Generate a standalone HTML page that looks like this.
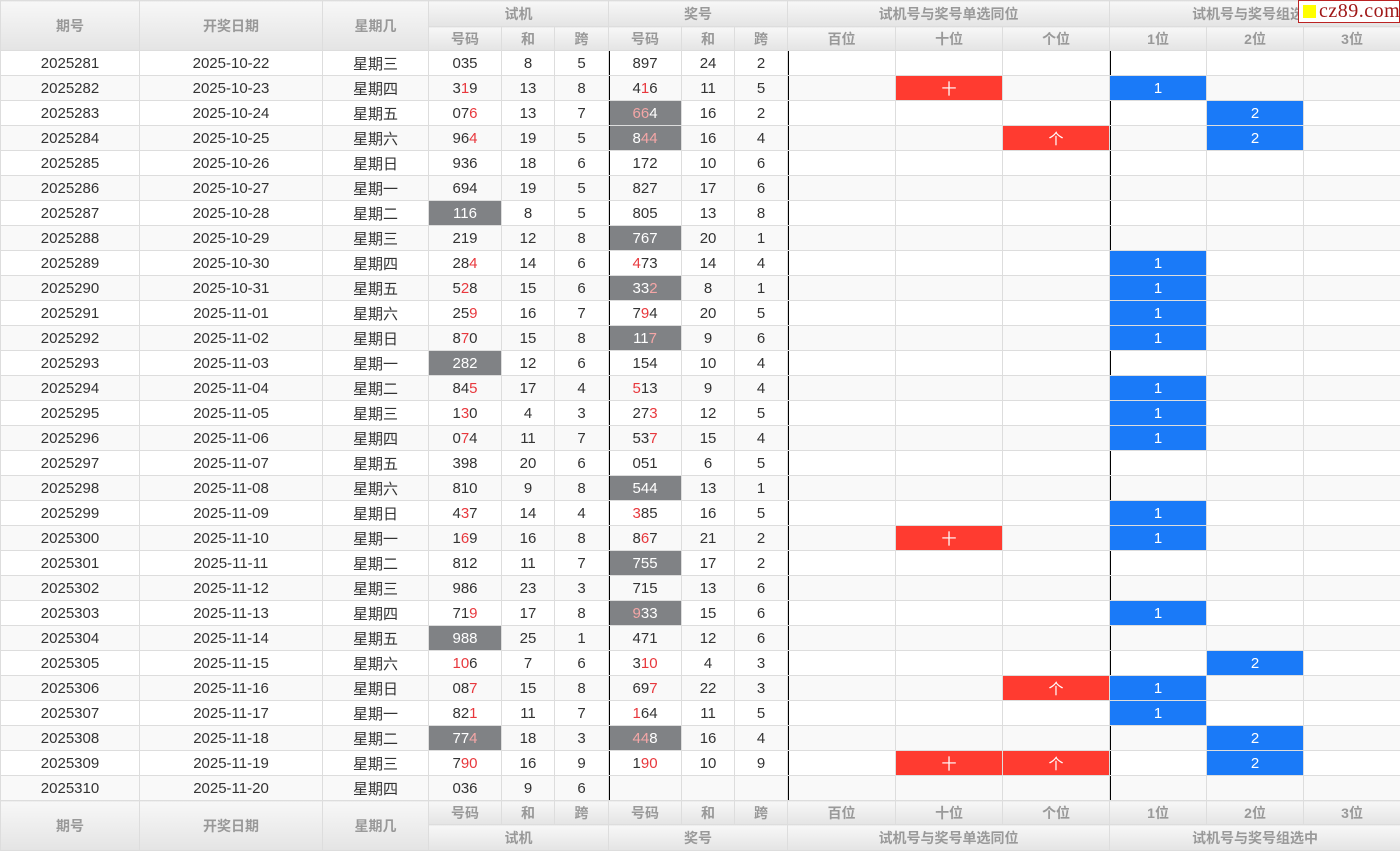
<!DOCTYPE html>
<html><head><meta charset="utf-8">
<style>
*{margin:0;padding:0;box-sizing:border-box}
body{width:1400px;height:851px;overflow:hidden;background:#fff;font-family:"Liberation Sans","Noto Sans CJK SC",sans-serif;position:relative}
table{border-collapse:collapse;table-layout:fixed;width:1400px}
td,th{border:1px solid #ddd;text-align:center;font-size:15px;color:#333;height:25px;padding:0;white-space:nowrap;overflow:hidden}
th{background:linear-gradient(#f7f7f7,#e4e4e4);color:#999;font-weight:bold;font-size:14px}
tr.h1 th{height:26px}
tr.h2 th{height:24px}
tbody tr:nth-child(even) td{background:#f9f9f9}
td.b{box-shadow:inset 1px 0 0 #000}
tbody tr td.g{background:#808285;color:#fff}
.r{color:#e8383d}
td.g .r{color:#f4a6a6}
tbody tr td.x{background:#ff3b30;color:#fff}
tbody tr td.u{background:#1a7af8;color:#fff}
.logo{position:absolute;left:1298px;top:0;width:102px;height:23px;background:#fff;border:1px solid #b22;color:#a01818;font-family:"Liberation Serif",serif;font-size:20px;line-height:20px;padding-left:20px;letter-spacing:0.5px}
.logo:before{content:"";position:absolute;left:4px;top:4px;width:13px;height:13px;background:#ff0}
</style></head><body>
<table>
<colgroup><col style="width:139px"><col style="width:183px"><col style="width:106px"><col style="width:73px"><col style="width:53px"><col style="width:54px"><col style="width:73px"><col style="width:53px"><col style="width:53px"><col style="width:108px"><col style="width:107px"><col style="width:107px"><col style="width:97px"><col style="width:97px"><col style="width:97px"></colgroup>
<thead>
<tr class="h1"><th rowspan="2">期号</th><th rowspan="2">开奖日期</th><th rowspan="2">星期几</th><th colspan="3">试机</th><th colspan="3">奖号</th><th colspan="3">试机号与奖号单选同位</th><th colspan="3">试机号与奖号组选中</th></tr>
<tr class="h2"><th>号码</th><th>和</th><th>跨</th><th>号码</th><th>和</th><th>跨</th><th>百位</th><th>十位</th><th>个位</th><th>1位</th><th>2位</th><th>3位</th></tr>
</thead>
<tbody>
<tr><td>2025281</td><td>2025-10-22</td><td>星期三</td><td>035</td><td>8</td><td>5</td><td class="b">897</td><td>24</td><td>2</td><td class="b"></td><td></td><td></td><td class="b"></td><td></td><td></td></tr>
<tr><td>2025282</td><td>2025-10-23</td><td>星期四</td><td>3<span class="r">1</span>9</td><td>13</td><td>8</td><td class="b">4<span class="r">1</span>6</td><td>11</td><td>5</td><td class="b"></td><td class="x">十</td><td></td><td class="u">1</td><td></td><td></td></tr>
<tr><td>2025283</td><td>2025-10-24</td><td>星期五</td><td>07<span class="r">6</span></td><td>13</td><td>7</td><td class="b g"><span class="r">66</span>4</td><td>16</td><td>2</td><td class="b"></td><td></td><td></td><td class="b"></td><td class="u">2</td><td></td></tr>
<tr><td>2025284</td><td>2025-10-25</td><td>星期六</td><td>96<span class="r">4</span></td><td>19</td><td>5</td><td class="b g">8<span class="r">44</span></td><td>16</td><td>4</td><td class="b"></td><td></td><td class="x">个</td><td class="b"></td><td class="u">2</td><td></td></tr>
<tr><td>2025285</td><td>2025-10-26</td><td>星期日</td><td>936</td><td>18</td><td>6</td><td class="b">172</td><td>10</td><td>6</td><td class="b"></td><td></td><td></td><td class="b"></td><td></td><td></td></tr>
<tr><td>2025286</td><td>2025-10-27</td><td>星期一</td><td>694</td><td>19</td><td>5</td><td class="b">827</td><td>17</td><td>6</td><td class="b"></td><td></td><td></td><td class="b"></td><td></td><td></td></tr>
<tr><td>2025287</td><td>2025-10-28</td><td>星期二</td><td class="g">116</td><td>8</td><td>5</td><td class="b">805</td><td>13</td><td>8</td><td class="b"></td><td></td><td></td><td class="b"></td><td></td><td></td></tr>
<tr><td>2025288</td><td>2025-10-29</td><td>星期三</td><td>219</td><td>12</td><td>8</td><td class="b g">767</td><td>20</td><td>1</td><td class="b"></td><td></td><td></td><td class="b"></td><td></td><td></td></tr>
<tr><td>2025289</td><td>2025-10-30</td><td>星期四</td><td>28<span class="r">4</span></td><td>14</td><td>6</td><td class="b"><span class="r">4</span>73</td><td>14</td><td>4</td><td class="b"></td><td></td><td></td><td class="u">1</td><td></td><td></td></tr>
<tr><td>2025290</td><td>2025-10-31</td><td>星期五</td><td>5<span class="r">2</span>8</td><td>15</td><td>6</td><td class="b g">33<span class="r">2</span></td><td>8</td><td>1</td><td class="b"></td><td></td><td></td><td class="u">1</td><td></td><td></td></tr>
<tr><td>2025291</td><td>2025-11-01</td><td>星期六</td><td>25<span class="r">9</span></td><td>16</td><td>7</td><td class="b">7<span class="r">9</span>4</td><td>20</td><td>5</td><td class="b"></td><td></td><td></td><td class="u">1</td><td></td><td></td></tr>
<tr><td>2025292</td><td>2025-11-02</td><td>星期日</td><td>8<span class="r">7</span>0</td><td>15</td><td>8</td><td class="b g">11<span class="r">7</span></td><td>9</td><td>6</td><td class="b"></td><td></td><td></td><td class="u">1</td><td></td><td></td></tr>
<tr><td>2025293</td><td>2025-11-03</td><td>星期一</td><td class="g">282</td><td>12</td><td>6</td><td class="b">154</td><td>10</td><td>4</td><td class="b"></td><td></td><td></td><td class="b"></td><td></td><td></td></tr>
<tr><td>2025294</td><td>2025-11-04</td><td>星期二</td><td>84<span class="r">5</span></td><td>17</td><td>4</td><td class="b"><span class="r">5</span>13</td><td>9</td><td>4</td><td class="b"></td><td></td><td></td><td class="u">1</td><td></td><td></td></tr>
<tr><td>2025295</td><td>2025-11-05</td><td>星期三</td><td>1<span class="r">3</span>0</td><td>4</td><td>3</td><td class="b">27<span class="r">3</span></td><td>12</td><td>5</td><td class="b"></td><td></td><td></td><td class="u">1</td><td></td><td></td></tr>
<tr><td>2025296</td><td>2025-11-06</td><td>星期四</td><td>0<span class="r">7</span>4</td><td>11</td><td>7</td><td class="b">53<span class="r">7</span></td><td>15</td><td>4</td><td class="b"></td><td></td><td></td><td class="u">1</td><td></td><td></td></tr>
<tr><td>2025297</td><td>2025-11-07</td><td>星期五</td><td>398</td><td>20</td><td>6</td><td class="b">051</td><td>6</td><td>5</td><td class="b"></td><td></td><td></td><td class="b"></td><td></td><td></td></tr>
<tr><td>2025298</td><td>2025-11-08</td><td>星期六</td><td>810</td><td>9</td><td>8</td><td class="b g">544</td><td>13</td><td>1</td><td class="b"></td><td></td><td></td><td class="b"></td><td></td><td></td></tr>
<tr><td>2025299</td><td>2025-11-09</td><td>星期日</td><td>4<span class="r">3</span>7</td><td>14</td><td>4</td><td class="b"><span class="r">3</span>85</td><td>16</td><td>5</td><td class="b"></td><td></td><td></td><td class="u">1</td><td></td><td></td></tr>
<tr><td>2025300</td><td>2025-11-10</td><td>星期一</td><td>1<span class="r">6</span>9</td><td>16</td><td>8</td><td class="b">8<span class="r">6</span>7</td><td>21</td><td>2</td><td class="b"></td><td class="x">十</td><td></td><td class="u">1</td><td></td><td></td></tr>
<tr><td>2025301</td><td>2025-11-11</td><td>星期二</td><td>812</td><td>11</td><td>7</td><td class="b g">755</td><td>17</td><td>2</td><td class="b"></td><td></td><td></td><td class="b"></td><td></td><td></td></tr>
<tr><td>2025302</td><td>2025-11-12</td><td>星期三</td><td>986</td><td>23</td><td>3</td><td class="b">715</td><td>13</td><td>6</td><td class="b"></td><td></td><td></td><td class="b"></td><td></td><td></td></tr>
<tr><td>2025303</td><td>2025-11-13</td><td>星期四</td><td>71<span class="r">9</span></td><td>17</td><td>8</td><td class="b g"><span class="r">9</span>33</td><td>15</td><td>6</td><td class="b"></td><td></td><td></td><td class="u">1</td><td></td><td></td></tr>
<tr><td>2025304</td><td>2025-11-14</td><td>星期五</td><td class="g">988</td><td>25</td><td>1</td><td class="b">471</td><td>12</td><td>6</td><td class="b"></td><td></td><td></td><td class="b"></td><td></td><td></td></tr>
<tr><td>2025305</td><td>2025-11-15</td><td>星期六</td><td><span class="r">10</span>6</td><td>7</td><td>6</td><td class="b">3<span class="r">10</span></td><td>4</td><td>3</td><td class="b"></td><td></td><td></td><td class="b"></td><td class="u">2</td><td></td></tr>
<tr><td>2025306</td><td>2025-11-16</td><td>星期日</td><td>08<span class="r">7</span></td><td>15</td><td>8</td><td class="b">69<span class="r">7</span></td><td>22</td><td>3</td><td class="b"></td><td></td><td class="x">个</td><td class="u">1</td><td></td><td></td></tr>
<tr><td>2025307</td><td>2025-11-17</td><td>星期一</td><td>82<span class="r">1</span></td><td>11</td><td>7</td><td class="b"><span class="r">1</span>64</td><td>11</td><td>5</td><td class="b"></td><td></td><td></td><td class="u">1</td><td></td><td></td></tr>
<tr><td>2025308</td><td>2025-11-18</td><td>星期二</td><td class="g">77<span class="r">4</span></td><td>18</td><td>3</td><td class="b g"><span class="r">44</span>8</td><td>16</td><td>4</td><td class="b"></td><td></td><td></td><td class="b"></td><td class="u">2</td><td></td></tr>
<tr><td>2025309</td><td>2025-11-19</td><td>星期三</td><td>7<span class="r">90</span></td><td>16</td><td>9</td><td class="b">1<span class="r">90</span></td><td>10</td><td>9</td><td class="b"></td><td class="x">十</td><td class="x">个</td><td class="b"></td><td class="u">2</td><td></td></tr>
<tr><td>2025310</td><td>2025-11-20</td><td>星期四</td><td>036</td><td>9</td><td>6</td><td class="b"></td><td></td><td></td><td class="b"></td><td></td><td></td><td class="b"></td><td></td><td></td></tr>
</tbody>
<tfoot>
<tr class="h2"><th rowspan="2">期号</th><th rowspan="2">开奖日期</th><th rowspan="2">星期几</th><th>号码</th><th>和</th><th>跨</th><th>号码</th><th>和</th><th>跨</th><th>百位</th><th>十位</th><th>个位</th><th>1位</th><th>2位</th><th>3位</th></tr>
<tr class="h1"><th colspan="3">试机</th><th colspan="3">奖号</th><th colspan="3">试机号与奖号单选同位</th><th colspan="3">试机号与奖号组选中</th></tr>
</tfoot>
</table>
<div class="logo">cz89.com</div>
</body></html>
